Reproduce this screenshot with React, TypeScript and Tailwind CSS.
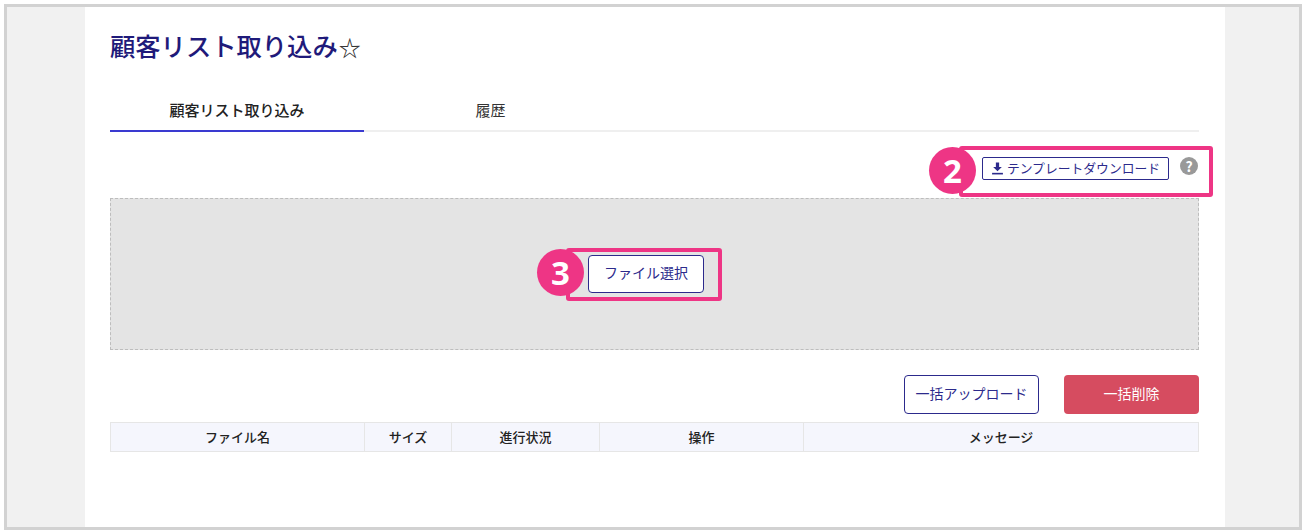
const columns = [
  { label: "ファイル名", width: "w-[254px]" },
  { label: "サイズ", width: "w-[87px]" },
  { label: "進行状況", width: "w-[148px]" },
  { label: "操作", width: "w-[204px]" },
  { label: "メッセージ", width: "flex-1" },
];

function Badge({ n }: { n: number }) {
  return (
    <span className="flex h-[47px] w-[47px] items-center justify-center rounded-full bg-[#ee3585] font-['Open_Sans',sans-serif] text-[33px] leading-none font-bold text-white">
      {n}
    </span>
  );
}

function DownloadIcon() {
  return (
    <svg viewBox="0 0 24 24" className="h-[13px] w-[13px]" fill="currentColor">
      <path d="M9 1h6v8h5l-8 8-8-8h5z" />
      <path d="M2 20h20v3H2z" />
    </svg>
  );
}

export default function App() {
  return (
    <div className="h-[531px] w-[1306px] overflow-hidden bg-white pt-[4px] pl-[4px] font-['Noto_Sans_CJK_JP',sans-serif]">
      <div className="h-[526px] w-[1298px] border-[3px] border-[#d2d2d2] bg-[#f1f1f1] pl-[78px]">
        <main className="h-full w-[1140px] bg-white pr-[26px] pl-[25px]">
          <h1 className="flex h-[82px] items-center pb-[5px] text-[25.3px] leading-none font-medium text-[#1f1a7a]">
            顧客リスト取り込み<span className="ml-[1px] text-[22px] text-[#333]">☆</span>
          </h1>

          <div className="flex h-[43px] border-b-2 border-[#efefef]">
            <div className="flex h-[43px] w-[254px] items-center justify-center border-b-2 border-[#3a3ad0] pt-[1px] text-[15px] font-medium text-[#222]">
              顧客リスト取り込み
            </div>
            <div className="flex h-[41px] w-[253px] items-center justify-center pt-[1px] text-[15px] text-[#333]">履歴</div>
          </div>

          <div className="relative flex h-[66px] items-start justify-end pt-[25px]">
            <button className="flex h-[23px] w-[187px] items-center justify-center gap-[3px] rounded-[2px] border border-[#2c2a8c] bg-white pb-[1px] text-[12.8px] text-[#2c2a8c]">
              <DownloadIcon />
              テンプレートダウンロード
            </button>
            <span className="mr-[1px] ml-[11px] flex h-[18px] w-[18px] items-center justify-center rounded-full bg-[#999] text-[14px] leading-none font-bold text-white">
              ?
            </span>
            <div className="absolute top-[14px] right-[-14px] h-[51px] w-[254px] rounded-[3px] border-[4px] border-[#ee3585]" />
            <div className="absolute top-[15px] left-[819px]">
              <Badge n={2} />
            </div>
          </div>

          <div className="relative flex h-[152px] items-center justify-center border border-dashed border-[#bdbdbd] bg-[#e4e4e4]">
            <button className="mr-[17px] h-[38px] w-[116px] rounded-[4px] border border-[#2c2a8c] bg-white pb-[3px] text-[14px] text-[#2c2a8c]">
              ファイル選択
            </button>
            <div className="absolute top-[49px] left-[455px] h-[53px] w-[156px] rounded-[3px] border-[4px] border-[#ee3585]" />
            <div className="absolute top-[50px] left-[426px]">
              <Badge n={3} />
            </div>
          </div>

          <div className="mt-[25px] flex justify-end gap-[25px]">
            <button className="h-[39px] w-[135px] rounded-[4px] border border-[#2c2a8c] bg-white pb-[3px] text-[14px] text-[#2c2a8c]">
              一括アップロード
            </button>
            <button className="h-[39px] w-[135px] rounded-[4px] bg-[#d64c60] pb-[3px] text-[14px] text-white">一括削除</button>
          </div>

          <div className="mt-[8px] flex h-[30px] border border-[#e6e6e6] bg-[#f5f6fd]">
            {columns.map((col, i) => (
              <div
                key={col.label}
                className={`flex items-center justify-center pb-[1px] text-[13px] font-medium text-[#222] ${col.width} ${
                  i < columns.length - 1 ? "border-r border-[#e6e6e6]" : ""
                }`}
              >
                {col.label}
              </div>
            ))}
          </div>
        </main>
      </div>
    </div>
  );
}
